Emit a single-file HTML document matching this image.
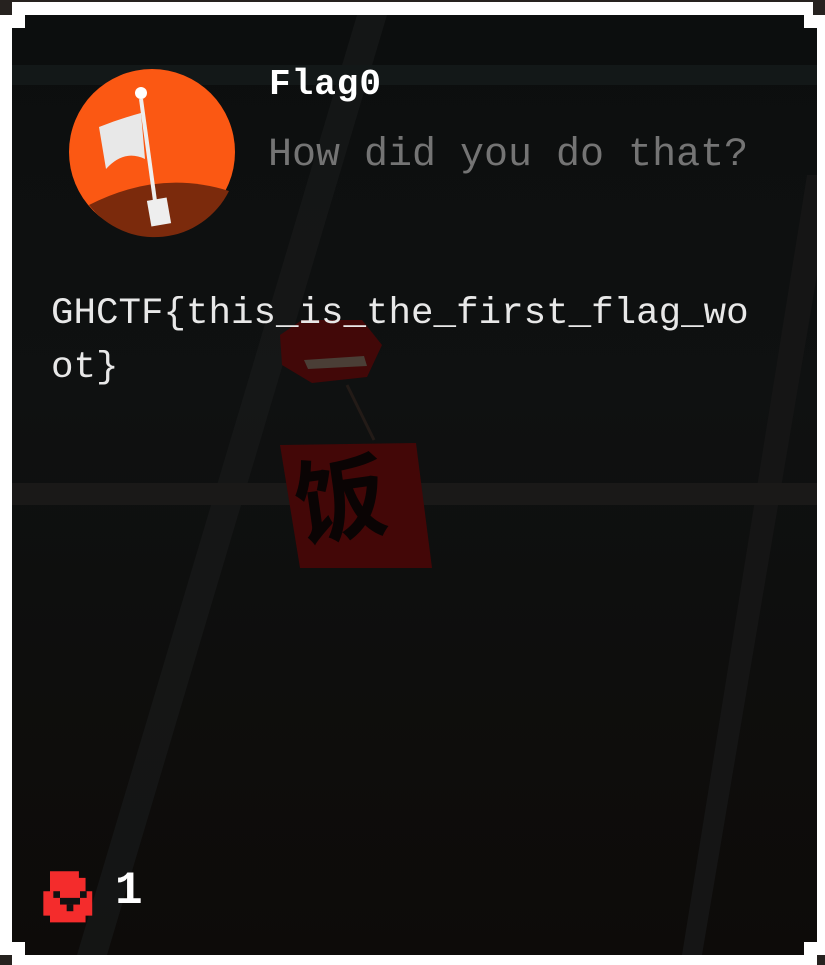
<!DOCTYPE html>
<html><head><style>
html,body{margin:0;padding:0;width:825px;height:965px;overflow:hidden;background:#fff;}
.c{position:absolute;background:#26221f;}
#p{position:absolute;left:12px;top:15px;width:805px;height:940px;
clip-path:polygon(13px 0,792px 0,792px 13px,805px 13px,805px 927px,792px 927px,792px 940px,13px 940px,13px 927px,0 927px,0 13px,13px 13px);
background:linear-gradient(180deg,#0c0e0e 0%,#0f1111 40%,#0d0b09 100%);overflow:hidden;}
.t{position:absolute;font-family:"Liberation Mono",monospace;white-space:pre;}
</style></head><body>
<div class="c" style="left:0;top:0;width:825px;height:2px"></div>
<div class="c" style="left:0;top:0;width:12px;height:15px"></div>
<div class="c" style="left:813px;top:0;width:12px;height:15px"></div>
<div class="c" style="left:0;top:955px;width:12px;height:10px"></div>
<div class="c" style="left:817px;top:955px;width:8px;height:10px"></div>
<div id="p">
<svg width="805" height="940" style="position:absolute;left:0;top:0">
<polygon points="345,0 375,0 95,940 65,940" fill="#181a1a" opacity=".7"/>
<polygon points="795,160 805,160 805,260 690,940 670,940" fill="#151515"/>
<rect x="0" y="50" width="805" height="20" fill="#131818"/>
<rect x="0" y="468" width="805" height="22" fill="#1a1918"/>
<polygon points="268,320 290,305 350,305 370,330 355,362 300,368 270,350" fill="#420808"/>
<polygon points="292,345 352,341 355,351 296,354" fill="#4a3e36"/>
<line x1="335" y1="370" x2="362" y2="425" stroke="#231b17" stroke-width="3"/>
<polygon points="268,430 404,428 420,553 288,553" fill="#430707"/>
</svg>
<div class="t" style="left:282px;top:412px;font-family:'Noto Sans CJK SC',sans-serif;font-weight:bold;font-size:92px;color:#0a0404;transform:rotate(-8deg)">饭</div>
<svg width="170" height="170" style="position:absolute;left:57px;top:54px" viewBox="0 0 170 170">
<circle cx="83" cy="83" r="83" fill="#fb5813"/>
<path d="M20,136 Q90,100 160,122 A83,83 0 0 1 20,136Z" fill="#7b2a0c"/>
<circle cx="72" cy="24" r="6" fill="#fff"/>
<line x1="72" y1="30" x2="86" y2="132" stroke="#eee" stroke-width="4"/>
<path d="M30,58 Q50,50 72,44 L76,90 Q55,80 37,100Z" fill="#e8e8e8"/>
<rect x="80" y="130" width="20" height="26" fill="#eee" transform="rotate(-10 90 143)"/>
</svg>
<div class="t" style="left:257px;top:49px;font-size:36px;font-weight:bold;color:#fff;letter-spacing:1px">Flag0</div>
<div class="t" style="left:256px;top:118px;font-size:40px;color:#747474">How did you do that?</div>
<div class="t" style="left:39px;top:272px;font-size:37.5px;line-height:54px;color:#e8e8e8">GHCTF{this_is_the_first_flag_wo
ot}</div>
<svg width="60" height="60" style="position:absolute;left:28px;top:854px" viewBox="0 0 54 54">
<path d="M14,2h26v6h6v12h6v22h-6v6H14v-6H8V20h6V8Z" fill="#f42c2c" transform="translate(-5,0)"/>
<rect x="12" y="20" width="6" height="6" fill="#111"/><rect x="36" y="20" width="6" height="6" fill="#111"/>
<rect x="18" y="26" width="18" height="6" fill="#111"/><rect x="24" y="32" width="6" height="6" fill="#111"/>
</svg>
<div class="t" style="left:103px;top:850px;font-size:46px;font-weight:bold;color:#fff">1</div>
</div>
</body></html>
